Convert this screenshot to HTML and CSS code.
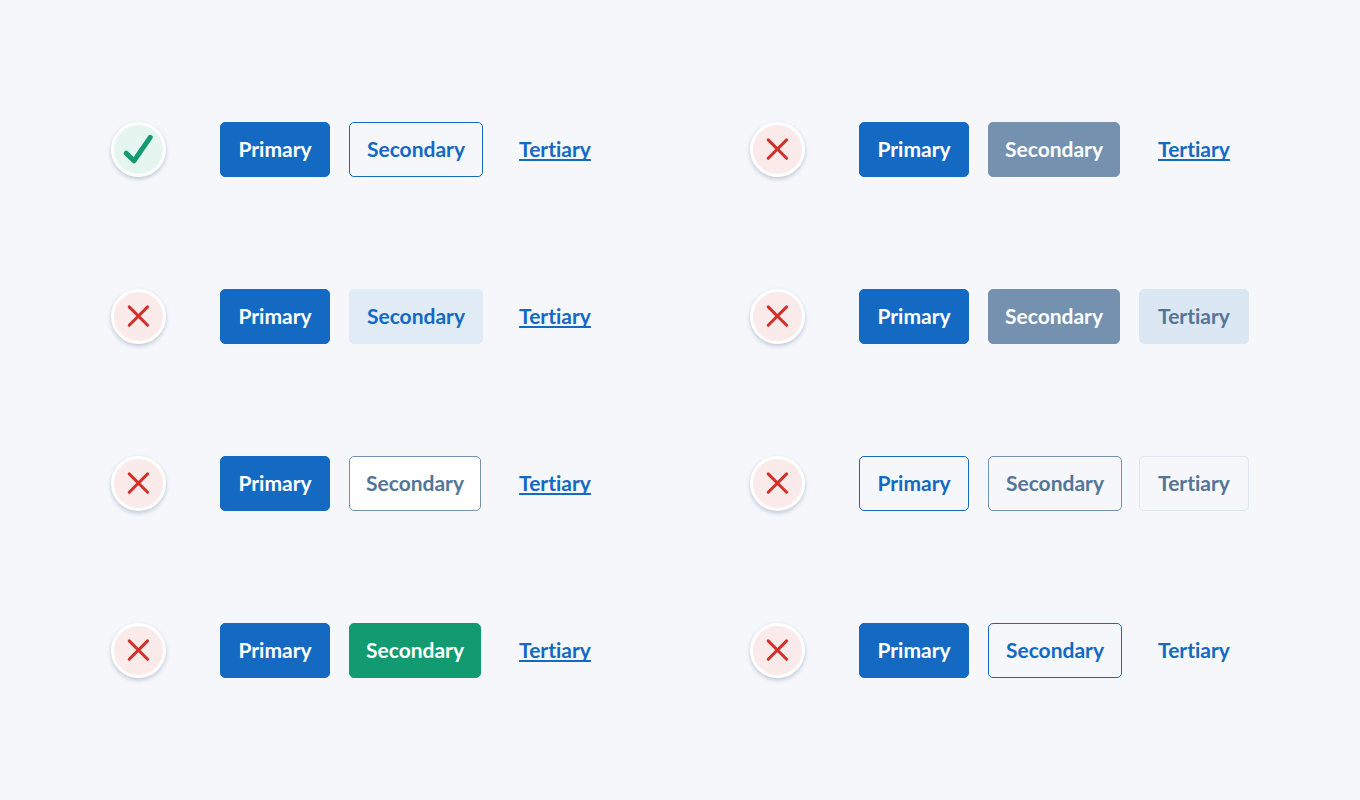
FILE: index.html
```html
<!DOCTYPE html>
<html lang="en">
<head>
  <meta charset="UTF-8">
  <meta name="viewport" content="width=device-width, initial-scale=1.0">
  <title>Button Styles</title>
  <link rel="stylesheet" href="styles.css">
</head>
<body>
  <!-- shared icons -->
  <svg class="icon-defs" aria-hidden="true">
    <symbol id="check" viewBox="0 0 49 49">
      <path d="M12.2 28.2 L20 35.8 L36.2 12.4"/>
    </symbol>
    <symbol id="cross" viewBox="0 0 49 49">
      <path d="M15.2 14.9 L33.6 33.3 M33.6 14.9 L15.2 33.3"/>
    </symbol>
  </svg>

  <main class="examples">
    <div class="example">
      <span class="badge good"><svg role="img" aria-label="Do"><use href="#check"/></svg></span>
      <div class="buttons">
        <button class="btn solid-blue">Primary</button>
        <button class="btn wide outline-blue">Secondary</button>
        <a class="btn link" href="#">Tertiary</a>
      </div>
    </div>

    <div class="example">
      <span class="badge bad"><svg role="img" aria-label="Don't"><use href="#cross"/></svg></span>
      <div class="buttons">
        <button class="btn solid-blue">Primary</button>
        <button class="btn solid-grey">Secondary</button>
        <a class="btn link" href="#">Tertiary</a>
      </div>
    </div>

    <div class="example">
      <span class="badge bad"><svg role="img" aria-label="Don't"><use href="#cross"/></svg></span>
      <div class="buttons">
        <button class="btn solid-blue">Primary</button>
        <button class="btn wide tint-blue">Secondary</button>
        <a class="btn link" href="#">Tertiary</a>
      </div>
    </div>

    <div class="example">
      <span class="badge bad"><svg role="img" aria-label="Don't"><use href="#cross"/></svg></span>
      <div class="buttons">
        <button class="btn solid-blue">Primary</button>
        <button class="btn solid-grey">Secondary</button>
        <button class="btn tint-grey">Tertiary</button>
      </div>
    </div>

    <div class="example">
      <span class="badge bad"><svg role="img" aria-label="Don't"><use href="#cross"/></svg></span>
      <div class="buttons">
        <button class="btn solid-blue">Primary</button>
        <button class="btn outline-grey white">Secondary</button>
        <a class="btn link" href="#">Tertiary</a>
      </div>
    </div>

    <div class="example">
      <span class="badge bad"><svg role="img" aria-label="Don't"><use href="#cross"/></svg></span>
      <div class="buttons">
        <button class="btn outline-blue">Primary</button>
        <button class="btn wide outline-grey">Secondary</button>
        <button class="btn outline-light">Tertiary</button>
      </div>
    </div>

    <div class="example">
      <span class="badge bad"><svg role="img" aria-label="Don't"><use href="#cross"/></svg></span>
      <div class="buttons">
        <button class="btn solid-blue">Primary</button>
        <button class="btn solid-green">Secondary</button>
        <a class="btn link" href="#">Tertiary</a>
      </div>
    </div>

    <div class="example">
      <span class="badge bad"><svg role="img" aria-label="Don't"><use href="#cross"/></svg></span>
      <div class="buttons">
        <button class="btn solid-blue">Primary</button>
        <button class="btn wide outline-blue">Secondary</button>
        <a class="btn link plain" href="#">Tertiary</a>
      </div>
    </div>
  </main>
</body>
</html>
```

FILE: styles.css
```css
* {
  margin: 0;
  padding: 0;
  box-sizing: border-box;
}

body {
  font-family: Lato, sans-serif;
  background-color: #f5f7fb;
}

.icon-defs {
  display: none;
}

.examples {
  min-height: 100vh;
  padding: 40px 20px;
  display: flex;
  flex-wrap: wrap;
  justify-content: center;
  align-content: center;
  gap: 112px 140px;
}

.example {
  display: flex;
  align-items: center;
  gap: 54px;
}

.badge {
  width: 55px;
  height: 55px;
  border: 3px solid #ffffff;
  border-radius: 50%;
  box-shadow: 0 2px 4px rgba(60, 90, 120, 0.3);
}

.badge svg {
  display: block;
  width: 100%;
  height: 100%;
  fill: none;
  stroke: currentColor;
  stroke-linecap: round;
  stroke-linejoin: round;
}

.badge.good {
  background-color: #e5f5ef;
  color: #129a71;
}

.badge.good svg {
  stroke-width: 5px;
}

.badge.bad {
  background-color: #faeaea;
  color: #d0312a;
}

.badge.bad svg {
  stroke-width: 3px;
}

.buttons {
  display: grid;
  grid-template-columns: 129px 151px 110px;
  justify-items: start;
}

.btn {
  min-width: 110px;
  height: 55px;
  padding: 0 16px 2px;
  border: 1px solid transparent;
  border-radius: 5px;
  background-color: transparent;
  font-family: inherit;
  font-size: 21px;
  font-weight: 700;
  font-variant-ligatures: none;
  line-height: 51px;
  text-align: center;
  cursor: pointer;
}

.wide {
  min-width: 134px;
}

.solid-blue {
  background-color: #1469c2;
  border-color: #1469c2;
  color: #ffffff;
}

.solid-grey {
  background-color: #7491b0;
  border-color: #7491b0;
  color: #ffffff;
}

.solid-green {
  background-color: #129a71;
  border-color: #129a71;
  color: #ffffff;
}

.tint-blue {
  background-color: #e0ebf6;
  border-color: #e0ebf6;
  color: #1469c2;
}

.tint-grey {
  background-color: #dbe7f3;
  border-color: #dbe7f3;
  color: #557596;
}

.outline-blue {
  border-color: #1469c2;
  color: #1469c2;
}

.outline-grey {
  border-color: #7491b0;
  color: #557596;
}

.outline-light {
  border-color: #dbe7f3;
  color: #557596;
}

.white {
  background-color: #ffffff;
}

.link {
  color: #1469c2;
  text-decoration: underline;
  text-decoration-thickness: 2px;
  text-decoration-skip-ink: none;
  text-underline-offset: 2px;
}

.plain {
  text-decoration: none;
}
```
